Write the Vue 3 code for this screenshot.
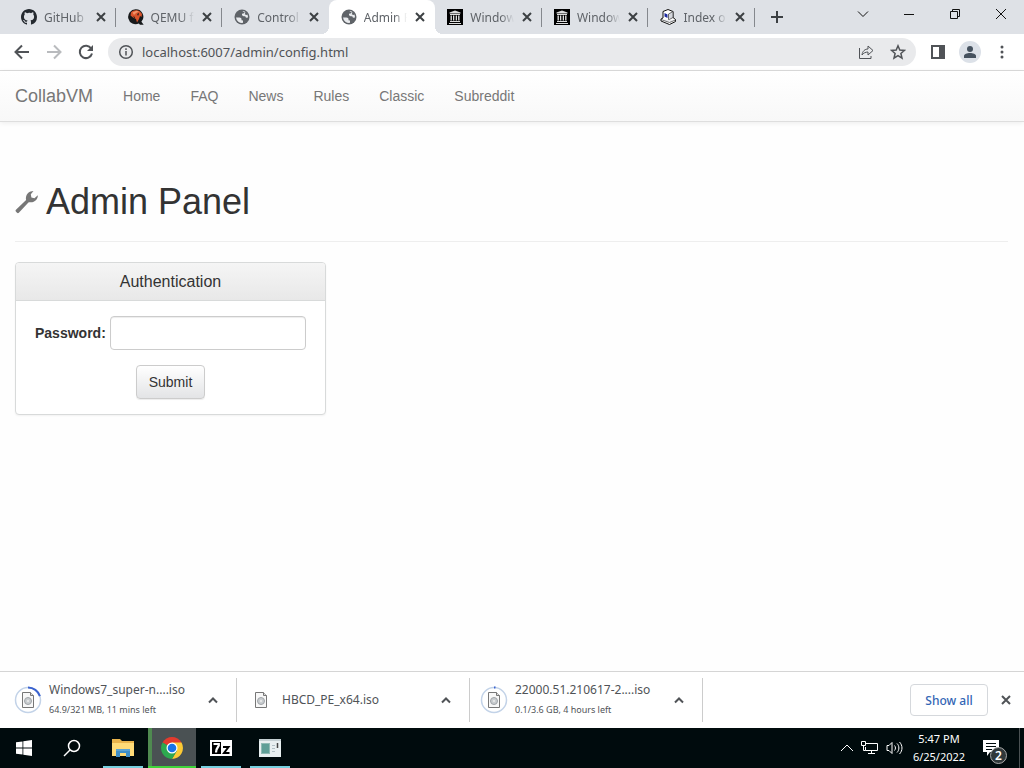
<script setup>
import { ref } from 'vue';

const password = ref('');
const address = ref('localhost:6007/admin/config.html');

const tabs = [
    { title: 'GitHub', icon: 'github' },
    { title: 'QEMU f', icon: 'qemu' },
    { title: 'Control', icon: 'globe' },
    { title: 'Admin P', icon: 'globe', active: true },
    { title: 'Window', icon: 'archive' },
    { title: 'Window', icon: 'archive' },
    { title: 'Index o', icon: 'computer' },
];

const links = ['Home', 'FAQ', 'News', 'Rules', 'Classic', 'Subreddit'];

const downloads = [
    { name: 'Windows7_super-n....iso', status: '64.9/321 MB, 11 mins left', progress: 20 },
    { name: 'HBCD_PE_x64.iso' },
    { name: '22000.51.210617-2....iso', status: '0.1/3.6 GB, 4 hours left', progress: 2 },
];
</script>

<template>
    <div class="Screen">
        <header class="TabStrip">
            <div class="Tabs">
                <div v-for="(tab, index) in tabs" :key="index" class="Tab"
                    :class="{ active: tab.active, plain: tabs[index + 1]?.active }">
                    <svg v-if="tab.icon === 'github'" class="Favicon" viewBox="0 0 16 16">
                        <path fill="#24292f" d="M8 0C3.58 0 0 3.58 0 8c0 3.54 2.29 6.53 5.47 7.59.4.07.55-.17.55-.38 0-.19-.01-.82-.01-1.49-2.01.37-2.53-.49-2.69-.94-.09-.23-.48-.94-.82-1.13-.28-.15-.68-.52-.01-.53.63-.01 1.08.58 1.23.82.72 1.21 1.87.87 2.33.66.07-.52.28-.87.51-1.07-1.78-.2-3.64-.89-3.64-3.95 0-.87.31-1.59.82-2.15-.08-.2-.36-1.02.08-2.12 0 0 .67-.21 2.2.82A7.6 7.6 0 0 1 8 3.86c.68 0 1.36.09 2 .27 1.53-1.04 2.2-.82 2.2-.82.44 1.1.16 1.92.08 2.12.51.56.82 1.27.82 2.15 0 3.07-1.87 3.75-3.65 3.95.29.25.54.73.54 1.48 0 1.07-.01 1.93-.01 2.2 0 .21.15.46.55.38A8.01 8.01 0 0 0 16 8c0-4.42-3.58-8-8-8z" />
                    </svg>
                    <svg v-else-if="tab.icon === 'qemu'" class="Favicon" viewBox="0 0 16 16">
                        <path fill="#17191b" d="M7.5.3a7.5 7.5 0 1 0 3.300 14.300l1.200 1.200h3.700l-2.300-3A7.500 7.500 0 0 0 7.500.3z" />
                        <path fill="#d9532b" d="M3 3.500C5 1 9 .6 12 2.500l2 2.500-.5 3L12 7l-1 3-2 3.500L8 10 5 8.500 2.500 6.500z" />
                        <path fill="#f09468" d="M4.500 3.500l4-1.700 2.500.7-3 1.500-2 2z" />
                        <path fill="#34261f" d="M9 5l2-1v1l-1 2zM5 7l2 1v2z" />
                    </svg>
                    <svg v-else-if="tab.icon === 'globe'" class="Favicon" viewBox="0 0 16 16">
                        <circle cx="8" cy="8" r="7.500" fill="#5f6368" />
                        <path fill="#e8eaed" d="M2 8.500h3.500c1.300 0 2 .8 2 1.800v1l1.500.2v2.300A6 6 0 0 1 2 8.500zM8.500 2.200c.8-.2 1.500 0 2.300.3l-.8 1.700-2 .6v1.500l1.500.9h1.700l.8 1.500 2-.2a6 6 0 0 0-.6-3l-1 .6-1.700-.8.8-1.800z" />
                    </svg>
                    <svg v-else-if="tab.icon === 'archive'" class="Favicon" viewBox="0 0 16 16">
                        <path fill="#000" d="M0 0h16v16H0z" />
                        <path fill="#ddd" d="M8 1.500l5.500 2v1h-11v-1zM3 5h10v1H3zM3 12h10v1H3zM2 14h12v1H2zM3.500 6.500h1.400v5H3.500zM6 6.500h1.300v5H6zM8.700 6.500H10v5H8.700zM11.100 6.500h1.400v5h-1.400z" />
                    </svg>
                    <svg v-else class="Favicon" viewBox="0 0 16 16">
                        <path fill="#fff" stroke="#111" d="M3 2.500l5-2 5 2v6l2.500 2v2L9.500 15.500 1 12v-2l2-1z" />
                        <path fill="#d5d7dd" stroke="#333" stroke-width=".7" d="M8.500 5l4.500-2.500v6L8.500 11z" />
                        <path fill="#e9eaee" stroke="#333" stroke-width=".7" d="M1 10.500l8.500 3L15.500 11" />
                        <path fill="#1c2aa0" d="M4.500 4l3 1.500v3.500l-3-1.500z" />
                    </svg>
                    <span class="TabTitle">{{ tab.title }}</span>
                    <button class="TabClose" aria-label="Close tab">
                        <svg viewBox="0 0 10 10"><path d="M1 1l8 8M9 1l-8 8" /></svg>
                    </button>
                </div>
            </div>
            <button class="NewTab" aria-label="New tab">
                <svg viewBox="0 0 12 12"><path d="M6 0v12M0 6h12" /></svg>
            </button>
            <div class="WindowControls">
                <button aria-label="Search tabs"><svg viewBox="0 0 12 12"><path d="M1 3.500l5 5 5-5" /></svg></button>
                <button aria-label="Minimize"><svg viewBox="0 0 12 12"><path d="M1 6.500h10" /></svg></button>
                <button aria-label="Restore"><svg viewBox="0 0 12 12"><path d="M1.500 3.500h7v7h-7zM3.500 3.500v-2h7v7h-2" /></svg></button>
                <button aria-label="Close"><svg viewBox="0 0 12 12"><path d="M1 1l10 10M11 1L1 11" /></svg></button>
            </div>
        </header>

        <div class="Toolbar">
            <button aria-label="Back"><svg viewBox="0 0 16 16"><path d="M15 8H2M8 1.500L1.500 8 8 14.500" /></svg></button>
            <button aria-label="Forward" class="disabled"><svg viewBox="0 0 16 16"><path d="M1 8h13M8 1.500L14.500 8 8 14.500" /></svg></button>
            <button aria-label="Reload">
                <svg viewBox="0 0 16 16"><path d="M13.200 4.500A6.200 6.200 0 1 0 14 9.500" /><path class="solid" d="M15 1v6H9z" /></svg>
            </button>
            <div class="Omnibox">
                <svg viewBox="0 0 16 16"><circle cx="8" cy="8" r="6.300" /><path d="M8 7v4.500M8 4.200v1.700" /></svg>
                <input v-model="address" type="text" aria-label="Address">
                <button aria-label="Share">
                    <svg class="thin" viewBox="0 0 16 16"><path d="M1.500 4v10.500H13V12M4 11c.5-4 3-6 6-6V2l5 4.500-5 4.500V8C7.500 8 5.500 9 4 11z" /></svg>
                </button>
                <button aria-label="Bookmark">
                    <svg class="star" viewBox="0 0 16 16"><path d="M8 1.800l1.800 4.200 4.700.4-3.600 3.100 1.100 4.600L8 11.600l-4 2.500 1.100-4.600L1.500 6.400l4.700-.4z" /></svg>
                </button>
            </div>
            <button aria-label="Side panel">
                <svg viewBox="0 0 16 16"><path d="M2 2h12v12H2z" /><path class="solid" d="M9 2h5v12H9z" /></svg>
            </button>
            <button aria-label="Profile" class="Profile">
                <svg viewBox="0 0 22 22"><circle cx="11" cy="11" r="11" fill="#dce1e8" /><circle cx="11" cy="8" r="3" fill="#46525f" /><path fill="#46525f" d="M5 17v-2c0-4 12-4 12 0v2z" /></svg>
            </button>
            <button aria-label="Menu">
                <svg class="dots" viewBox="0 0 16 16"><circle cx="8" cy="3" r="1.500" /><circle cx="8" cy="8" r="1.500" /><circle cx="8" cy="13" r="1.500" /></svg>
            </button>
        </div>

        <nav class="Navbar">
            <a href="#" class="Brand">CollabVM</a>
            <a v-for="link in links" :key="link" href="#">{{ link }}</a>
        </nav>

        <main class="Content">
            <h1>
                <svg viewBox="0 0 24 24"><path d="M1 20.200L11.600 10C10.800 6 12.700 2.300 16.300 1l3-.4L16.500 4l.6 3.300 3.200.8L23.800 5c.2 4.300-3.500 7.600-7.600 7.300-.8 0-1.500-.1-2.200.2L4 23.300c-.6.6-1.300.6-1.900 0L.9 22c-.5-.5-.5-1.200.1-1.800z" /></svg>
                Admin Panel
            </h1>
            <section class="Panel">
                <h3>Authentication</h3>
                <form @submit.prevent>
                    <div class="Field">
                        <label for="password">Password:</label>
                        <input id="password" v-model="password" type="password">
                    </div>
                    <button type="submit">Submit</button>
                </form>
            </section>
        </main>

        <div class="Downloads">
            <div v-for="item in downloads" :key="item.name" class="Download">
                <svg class="File" viewBox="0 0 28 28">
                    <template v-if="item.status">
                        <circle cx="14" cy="14" r="12.500" fill="none" stroke="#c3d3e8" stroke-width="1.500" />
                        <circle cx="14" cy="14" r="12.500" fill="none" stroke="#3b63cf" stroke-width="2" pathLength="100"
                            :stroke-dasharray="`${item.progress} 100`" transform="rotate(-90 14 14)" />
                    </template>
                    <path fill="#f8f8f8" stroke="#777" d="M8.500 6.500h8l3 3v12h-11z" />
                    <path fill="#ddd" stroke="#777" d="M16.500 6.500v3h3" />
                    <circle cx="14" cy="15" r="3.500" fill="#c9cdd0" stroke="#a0a4a8" />
                    <circle cx="14" cy="15" r="1" fill="#eee" />
                </svg>
                <div class="Details">
                    <p>{{ item.name }}</p>
                    <small v-if="item.status">{{ item.status }}</small>
                </div>
                <button aria-label="Download options"><svg viewBox="0 0 10 10"><path d="M1 7.500l4-4 4 4" /></svg></button>
            </div>
            <button class="ShowAll">Show all</button>
            <button class="CloseBar" aria-label="Close downloads"><svg viewBox="0 0 10 10"><path d="M1 1l8 8M9 1L1 9" /></svg></button>
        </div>

        <footer class="Taskbar">
            <button aria-label="Start">
                <svg width="16" height="16" viewBox="0 0 16 16"><path fill="#fff" d="M0 2.300L6.500 1.400v6.200H0zM7.300 1.300L16 0v7.600H7.300zM0 8.400h6.500v6.200L0 13.700zM7.300 8.400H16V16l-8.700-1.300z" /></svg>
            </button>
            <button aria-label="Search">
                <svg width="18" height="18" viewBox="0 0 18 18" fill="none" stroke="#fff" stroke-width="1.500"><circle cx="11" cy="7" r="5.500" /><path d="M7 11l-6 6" /></svg>
            </button>
            <div class="Apps">
                <button class="open" aria-label="File Explorer">
                    <svg width="22" height="20" viewBox="0 0 22 20">
                        <path fill="#e9b44c" d="M0 1h8l2 2h12v14H0z" />
                        <path fill="#ffdb77" d="M0 5h22v13H0z" />
                        <path fill="#3f8fc7" d="M4 11h14v8h-4v-4H8v4H4z" />
                        <path fill="#5ba3d3" d="M4 11h14v2H4z" />
                    </svg>
                </button>
                <button class="open current" aria-label="Chrome">
                    <svg width="22" height="22" viewBox="0 0 22 22">
                        <path fill="#e33b2e" d="M11 11L1.500 5.500a11 11 0 0 1 19 0z" />
                        <path fill="#fcc934" d="M11 11V5.500h9.500A11 11 0 0 1 11 22l5-8.500z" />
                        <path fill="#2da94f" d="M11 11l5 2.500L11 22A11 11 0 0 1 1.500 5.500z" />
                        <circle cx="11" cy="11" r="5.500" fill="#fff" />
                        <circle cx="11" cy="11" r="4.300" fill="#1a73e8" />
                    </svg>
                </button>
                <button class="open" aria-label="7-Zip">
                    <svg width="22" height="16" viewBox="0 0 22 16">
                        <path fill="#fff" d="M0 0h22v16H0z" />
                        <path fill="#000" d="M2 2h9v12H2z" />
                        <path fill="none" stroke="#fff" stroke-width="2.200" d="M3.500 4h5.300v1.500C7 8 6 9.500 6 12.500" />
                        <path fill="none" stroke="#000" stroke-width="2" d="M13 7h5.500l-4.500 6h5.500" />
                    </svg>
                </button>
                <button class="open" aria-label="Server Manager">
                    <svg width="22" height="18" viewBox="0 0 22 18">
                        <path fill="#e8eff0" d="M0 0h22v18H0z" />
                        <path fill="#c5d0d3" d="M0 0h22v2H0z" />
                        <path fill="#8fbab4" d="M2 4h9v11H2z" />
                        <path fill="#5f9f97" d="M3 5h7v9H3z" />
                        <path stroke="#b2c0c5" d="M13 6.500h3M13 9.500h3M13 12.500h3" />
                        <path stroke="#444" stroke-width="1.500" d="M18.500 4v5" />
                    </svg>
                </button>
            </div>
            <div class="Tray">
                <svg width="12" height="12" viewBox="0 0 12 12"><path d="M0 9l6-6 6 6" /></svg>
                <svg width="17" height="16" viewBox="0 0 17 16"><path d="M5 3.500h11.500v7H4.500V7M10.500 10.500v3M7 13.500h7M.5 1.500h4v4h-4zM2.500 5.500v5h2" /></svg>
                <svg width="17" height="14" viewBox="0 0 16 14"><path d="M.5 4.500h2l3-3v11l-3-3h-2zM8 4.500c1.300 1.500 1.300 3.500 0 5M10.500 2.500c2.500 2.500 2.500 6.500 0 9M13 1c3.300 3.500 3.300 8.500 0 12" /></svg>
            </div>
            <div class="Clock">
                <time>5:47 PM</time>
                <time>6/25/2022</time>
            </div>
            <button class="Notifications" aria-label="Notifications">
                <svg width="16" height="16" viewBox="0 0 16 16"><path fill="#fff" d="M0 0h16v12H7l-3 4v-4H0z" /><path stroke="#000b0d" d="M3 3.500h10M3 6.500h10M3 9.500h6" /></svg>
                <span>2</span>
            </button>
        </footer>
    </div>
</template>

<style>
body {
    margin: 0;
}
</style>

<style scoped>
.Screen {
    display: flex;
    flex-direction: column;
    min-height: 100vh;

    background: #fefefe;
    color: #333;
    font-family: "Noto Sans", "Open Sans", sans-serif;
    font-size: 12px;
}

.Screen * {
    box-sizing: border-box;
}

.Screen button {
    display: flex;
    align-items: center;
    justify-content: center;
    flex-shrink: 0;

    padding: 0;
    border: 0;
    background: transparent;
    font-family: inherit;
}

.TabStrip {
    display: flex;
    height: 34px;
    padding-left: 9px;
    background: #dee1e6;
}

.Tabs {
    display: flex;
    flex: 0 1 746px;
    min-width: 0;
}

.Tab {
    position: relative;
    display: flex;
    align-items: center;
    flex: 1 1 0;
    min-width: 0;
    padding: 0 10px 0 12px;
    color: #5f6368;
}

.Tab::after {
    content: '';
    position: absolute;
    top: 8px;
    right: 0;
    width: 1px;
    height: 19px;
    background: #85888d;
}

.Tab.plain::after {
    display: none;
}

.Tab.active {
    background: #fff;
    border-radius: 8px 8px 0 0;
}

/* curved feet of the selected tab */
.Tab.active::before,
.Tab.active::after {
    content: '';
    position: absolute;
    top: auto;
    bottom: 0;
    width: 8px;
    height: 8px;
}

.Tab.active::before {
    left: -8px;
    background: radial-gradient(circle at 0 0, transparent 8px, #fff 8px);
}

.Tab.active::after {
    right: -8px;
    background: radial-gradient(circle at 100% 0, transparent 8px, #fff 8px);
}

.Favicon {
    width: 16px;
    height: 16px;
    flex-shrink: 0;
}

.TabTitle {
    flex: 1;
    min-width: 0;
    margin: 0 8px 0 7px;
    overflow: hidden;
    white-space: nowrap;
    mask-image: linear-gradient(90deg, #000 70%, transparent);
}

.TabClose svg {
    width: 10px;
    height: 10px;
    stroke: #3c4043;
    stroke-width: 2;
}

.NewTab {
    width: 44px;
}

.NewTab svg {
    width: 12px;
    height: 12px;
    stroke: #3c4043;
    stroke-width: 2;
}

.WindowControls {
    display: flex;
    margin-left: auto;
}

.WindowControls button {
    width: 46px;
    height: 28px;
}

.WindowControls svg {
    width: 12px;
    height: 12px;
    fill: none;
    stroke: #111;
}

.Toolbar {
    display: flex;
    align-items: center;
    height: 37px;
    padding: 0 6px;
    border-bottom: 1px solid #dcdcdc;
    background: #fff;
}

.Toolbar button {
    width: 32px;
    height: 28px;
}

.Toolbar svg {
    width: 16px;
    height: 16px;
    flex-shrink: 0;
    fill: none;
    stroke: #505357;
    stroke-width: 2;
}

.Toolbar .disabled svg {
    stroke: #b9bbbe;
}

.Toolbar .solid,
.Toolbar .dots {
    fill: #505357;
    stroke: none;
}

.Toolbar .Profile svg {
    width: 22px;
    height: 22px;
    stroke: none;
}

.Omnibox {
    display: flex;
    align-items: center;
    flex: 1;
    min-width: 0;
    height: 28px;
    margin: 0 6px;
    padding: 0 2px 0 10px;
    border-radius: 14px;
    background: #e9eaec;
}

.Omnibox svg {
    stroke-width: 1.5;
}

.Toolbar .thin {
    stroke-width: 1;
}

.Omnibox input {
    flex: 1;
    min-width: 0;
    margin-left: 8px;
    padding: 0;
    border: 0;
    outline: 0;
    background: transparent;
    color: #505357;
    font-family: inherit;
    font-size: 13px;
}

.Navbar {
    display: flex;
    align-items: center;
    height: 51px;
    border-bottom: 1px solid #dedede;
    background: linear-gradient(#fff, #f8f8f8);
    box-shadow: 0 1px 5px #00000013;
    font-family: "Liberation Sans", Arial, sans-serif;
}

.Navbar a {
    padding: 0 15px;
    color: #777;
    font-size: 14px;
    text-decoration: none;
}

.Navbar .Brand {
    font-size: 18px;
}

.Content {
    flex: 1;
    padding: 60px 16px 20px 15px;
    font-family: "Liberation Sans", Arial, sans-serif;
}

.Content h1 {
    display: flex;
    align-items: center;
    gap: 8px;

    margin: 0 0 20px;
    padding-bottom: 19px;
    border-bottom: 1px solid #eee;

    font-size: 36px;
    font-weight: 400;
    line-height: 40px;
}

.Content h1 svg {
    width: 23px;
    height: 24px;
    fill: #777;
}

.Panel {
    width: 311px;
    max-width: 100%;
    border: 1px solid #d8dada;
    border-radius: 4px;
    background: #fff;
    box-shadow: 0 1px 2px #0000000d;
    text-align: center;
}

.Panel h3 {
    margin: 0;
    padding: 10px 15px;
    border-bottom: 1px solid #d8dada;
    border-radius: 3px 3px 0 0;
    background: linear-gradient(#f5f5f5, #e8e8e8);
    font-size: 16px;
    font-weight: 400;
    line-height: 17px;
}

.Panel form {
    display: flex;
    flex-direction: column;
    align-items: center;
    gap: 15px;
    padding: 15px 19px;
    font-size: 14px;
}

.Field {
    display: flex;
    align-items: center;
    gap: 4px;
    width: 100%;
}

.Field label {
    font-weight: 700;
}

.Field input {
    flex: 1;
    min-width: 0;
    height: 34px;
    padding: 6px 12px;
    border: 1px solid #ccc;
    border-radius: 4px;
    box-shadow: inset 0 1px 1px #00000013;
    font-size: 14px;
}

.Panel form button {
    height: 34px;
    padding: 0 12px;
    border: 1px solid #ccc;
    border-radius: 4px;
    background: linear-gradient(#fff, #e3e4e6);
    box-shadow: 0 1px 1px #00000013;
    color: #333;
    font-size: 14px;
}

.Downloads {
    display: flex;
    align-items: center;
    height: 57px;
    padding-left: 4px;
    border-top: 1px solid #d5d5d5;
    background: #fff;
    color: #505357;
}

.Download {
    display: flex;
    align-items: center;
    width: 233px;
    height: 44px;
    padding: 0 8px 0 10px;
    border-right: 1px solid #ccc;
}

.File {
    width: 28px;
    height: 28px;
    flex-shrink: 0;
}

.Details {
    flex: 1;
    min-width: 0;
    margin-left: 7px;
    white-space: nowrap;
}

.Details p {
    margin: 0;
    line-height: 20px;
}

.Details small {
    display: block;
    font-size: 9px;
    line-height: 20px;
}

.Download button {
    width: 30px;
    height: 30px;
}

.Download button svg,
.CloseBar svg {
    width: 10px;
    height: 10px;
    fill: none;
    stroke: #505357;
    stroke-width: 2;
}

.Screen .ShowAll {
    width: 78px;
    height: 32px;
    margin-left: auto;
    border: 1px solid #d5d8dc;
    border-radius: 4px;
    color: #3366b5;
    font-size: 12px;
    font-weight: 500;
}

.CloseBar {
    width: 36px;
    height: 32px;
}

.Taskbar {
    display: flex;
    height: 40px;
    background: #000b0d;
    color: #fff;
}

.Taskbar button {
    width: 48px;
    height: 40px;
}

.Apps {
    display: flex;
    gap: 1px;
    margin-left: 3px;
}

.Taskbar .open {
    position: relative;
}

.Taskbar .open::after {
    content: '';
    position: absolute;
    right: 4px;
    bottom: 0;
    left: 4px;
    height: 2px;
    background: #76d0df;
}

.Taskbar .current {
    background: #4a5153;
    box-shadow: inset 4px 0 #4f8a50;
}

.Taskbar .current::after {
    right: 0;
    left: 0;
    background: #3fd43a;
}

.Tray {
    display: flex;
    align-items: center;
    gap: 8px;
    margin-left: auto;
}

.Tray svg {
    fill: none;
    stroke: #fff;
}

.Clock {
    display: flex;
    flex-direction: column;
    align-items: center;
    justify-content: center;
    width: 72px;
    font-size: 11px;
    line-height: 18px;
}

.Taskbar .Notifications {
    position: relative;
    width: 45px;
    margin-right: 4px;
    padding-right: 12px;
    border-right: 1px solid #4a5153;
    color: #fff;
}

.Notifications span {
    position: absolute;
    right: 12px;
    bottom: 4px;
    width: 17px;
    height: 17px;
    border: 1px solid #aaa;
    border-radius: 50%;
    background: #30383a;
    font-size: 12px;
    font-weight: 600;
    line-height: 15px;
}
</style>
